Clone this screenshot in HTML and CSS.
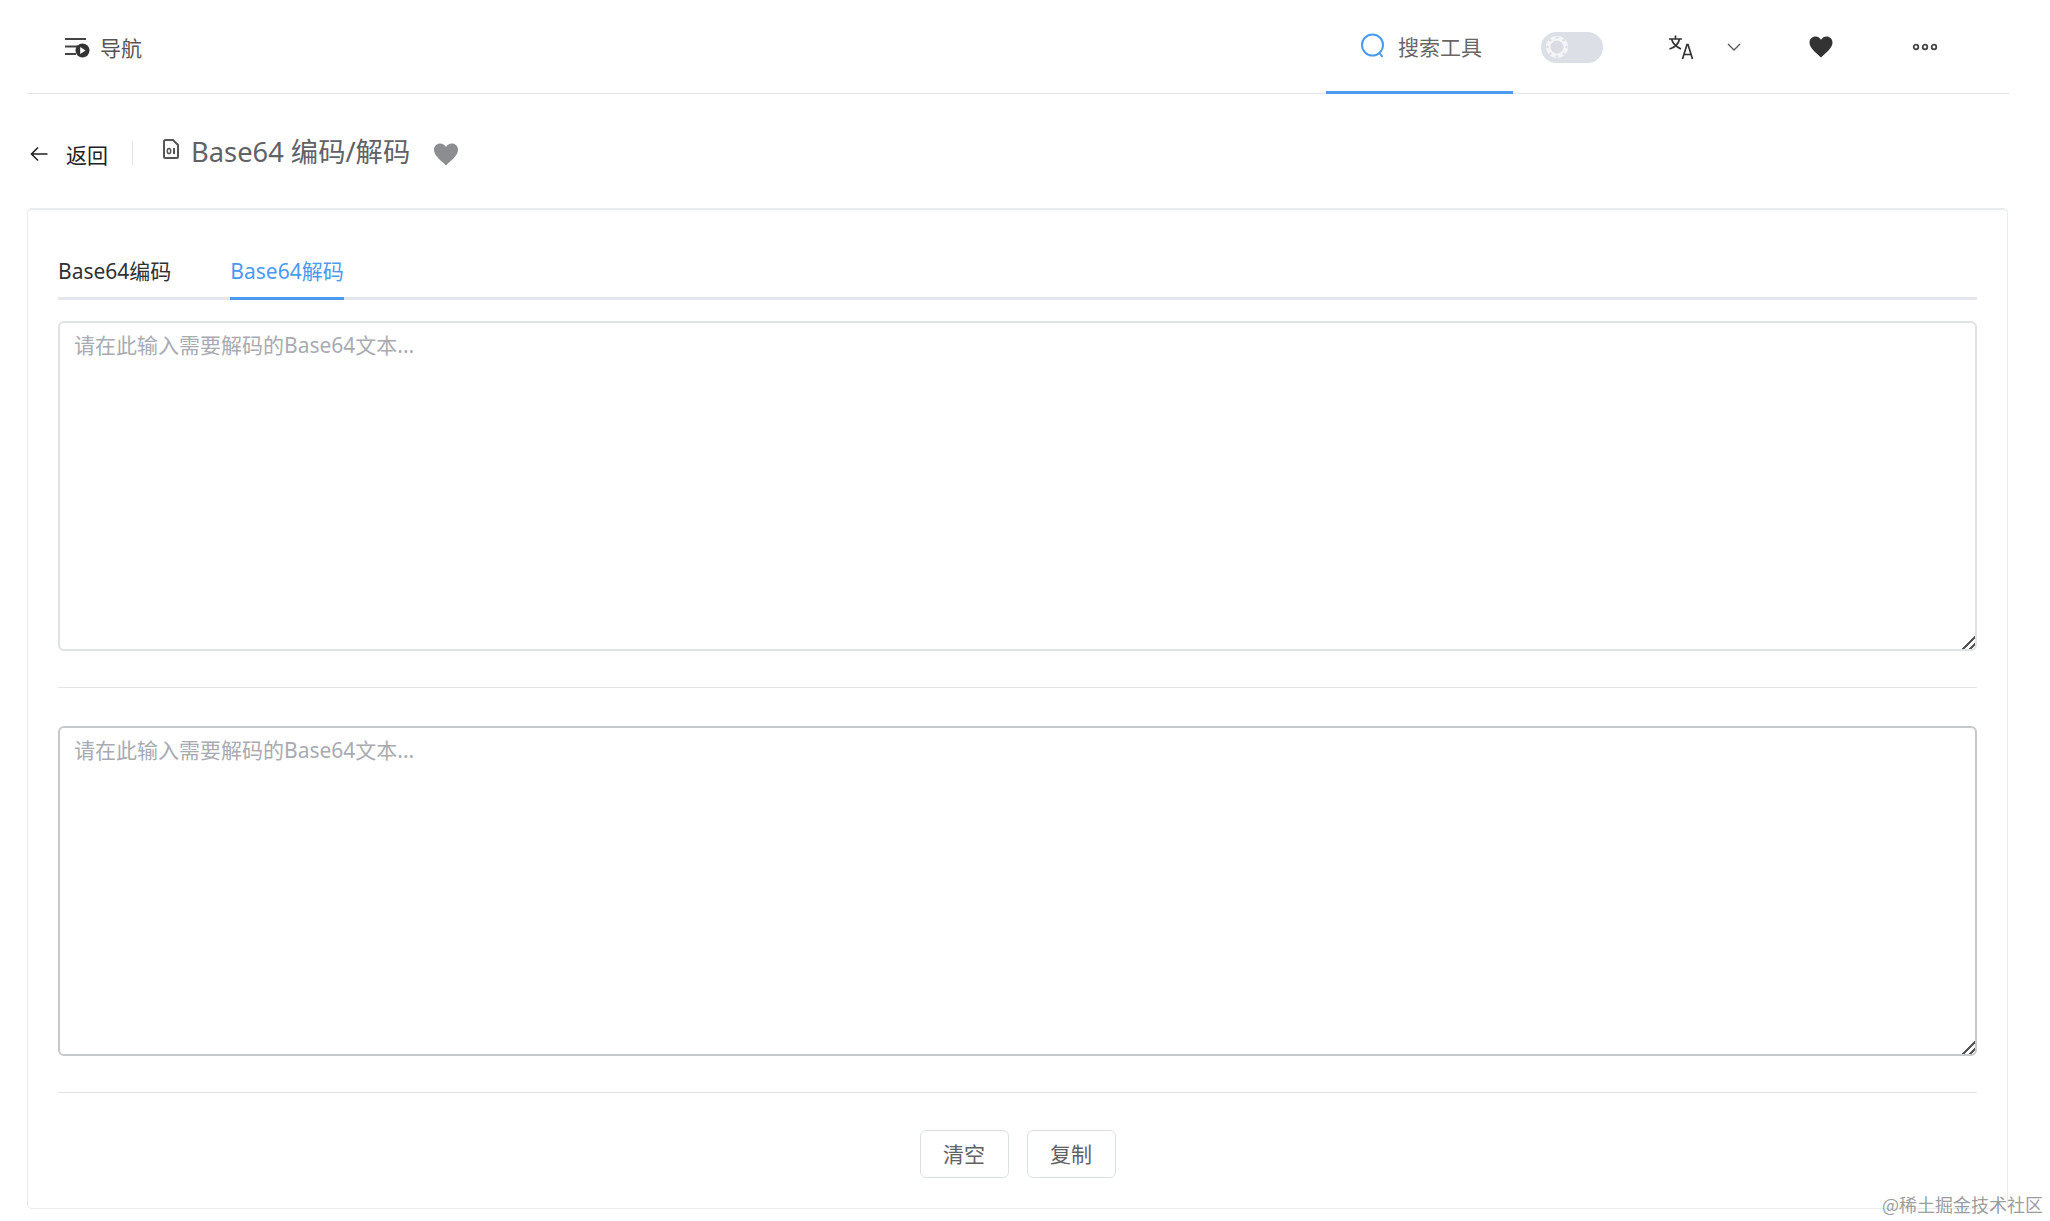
FILE: index.html
```html
<!DOCTYPE html>
<html lang="zh-CN">
<head>
<meta charset="UTF-8">
<meta name="viewport" content="width=device-width, initial-scale=1.0">
<title>Base64 编码/解码</title>
<link rel="stylesheet" href="styles.css">
</head>
<body>
<div class="page">
    <div class="header">
        <div class="nav-btn">
            <svg class="nav-icon" width="26" height="22" viewBox="0 0 26 22">
                <path d="M1 3h21M1 10.500h14M1 18h11" stroke="#444" stroke-width="2" fill="none"/>
                <circle cx="18.500" cy="14.500" r="7" fill="#333"/>
                <path d="M16.200 11v7l5.400-3.500z" fill="#fff"/>
            </svg>
            <span>导航</span>
        </div>
        <div class="search-tab">
            <svg width="26" height="26" viewBox="0 0 26 26">
                <circle cx="12.500" cy="12" r="10.500" stroke="#4a9bf0" stroke-width="2" fill="none"/>
                <path d="M19.500 20l3 4" stroke="#4a9bf0" stroke-width="2" fill="none"/>
            </svg>
            <span>搜索工具</span>
        </div>
        <div class="toggle">
            <svg class="toggle-knob" width="24" height="24" viewBox="0 0 24 24">
                <circle cx="12" cy="12" r="11" fill="#f4f5f7"/>
                <circle cx="12" cy="12" r="6.500" fill="#d9dce3"/>
                <g fill="#d9dce3">
                    <circle cx="12" cy="2.500" r="1.200"/>
                    <circle cx="12" cy="21.500" r="1.200"/>
                    <circle cx="2.500" cy="12" r="1.200"/>
                    <circle cx="21.500" cy="12" r="1.200"/>
                    <circle cx="5.300" cy="5.300" r="1.200"/>
                    <circle cx="18.700" cy="5.300" r="1.200"/>
                    <circle cx="5.300" cy="18.700" r="1.200"/>
                    <circle cx="18.700" cy="18.700" r="1.200"/>
                </g>
            </svg>
        </div>
        <svg class="lang-icon" width="26" height="26" viewBox="0 0 26 26">
            <path d="M1 5h13M7.500 1.500V5M3.500 5c1.500 5 5 8 9.500 10M11.500 5c-1 5-5 8.500-10 10M14.500 25L19 10.500h1L24.500 25M16 20.500h7" stroke="#333" stroke-width="1.700" fill="none"/>
        </svg>
        <svg class="chevron" width="14" height="8" viewBox="0 0 14 8">
            <path d="M1 1l6 6 6-6" stroke="#555" stroke-width="1.300" fill="none"/>
        </svg>
        <svg class="fav-icon" width="24" height="22" viewBox="0 0 24 22">
            <path d="M12 21.500C8 17.500 0.500 12.500 0.500 6.500 0.500 3 3.200 0.500 6.500 0.500c2.300 0 4.300 1.200 5.500 3.300C13.200 1.700 15.200 0.500 17.500 0.500c3.300 0 6 2.500 6 6 0 6-7.500 11-11.500 15z" fill="#333"/>
        </svg>
        <svg class="more-icon" width="26" height="8" viewBox="0 0 26 8">
            <g stroke="#444" stroke-width="1.800" fill="none">
                <circle cx="4" cy="4" r="2.300"/>
                <circle cx="13" cy="4" r="2.300"/>
                <circle cx="22" cy="4" r="2.300"/>
            </g>
        </svg>
    </div>

    <div class="title-row">
        <svg class="back-icon" width="18" height="16" viewBox="0 0 18 16">
            <path d="M17.500 8H1.500M8 1.500L1.500 8 8 14.500" stroke="#222" stroke-width="1.600" fill="none"/>
        </svg>
        <span class="back-text">返回</span>
        <span class="title-divider"></span>
        <svg class="doc-icon" width="16" height="20" viewBox="0 0 16 20">
            <path d="M2.500 1h7.500l5 5v11.500a1.500 1.500 0 0 1-1.500 1.500h-11A1.500 1.500 0 0 1 1 17.500v-15A1.500 1.500 0 0 1 2.500 1z" stroke="#555" stroke-width="2" fill="none"/>
            <ellipse cx="6" cy="12" rx="1.700" ry="2.600" stroke="#555" stroke-width="1.500" fill="none"/>
            <path d="M11 9v6" stroke="#555" stroke-width="2"/>
        </svg>
        <h1 class="title">Base64 编码/解码</h1>
        <svg class="title-heart" width="26" height="23" viewBox="0 0 24 22">
            <path d="M12 21.500C8 17.500 0.500 12.500 0.500 6.500 0.500 3 3.200 0.500 6.500 0.500c2.300 0 4.300 1.200 5.500 3.300C13.200 1.700 15.200 0.500 17.500 0.500c3.300 0 6 2.500 6 6 0 6-7.500 11-11.500 15z" fill="#8b8d90"/>
        </svg>
    </div>

    <div class="card">
        <div class="tabs">
            <div class="tab">Base64编码</div>
            <div class="tab active">Base64解码</div>
        </div>
        <textarea class="text-box" placeholder="请在此输入需要解码的Base64文本..."></textarea>
        <div class="divider"></div>
        <textarea class="text-box dark" placeholder="请在此输入需要解码的Base64文本..."></textarea>
        <div class="divider last"></div>
        <div class="actions">
            <button>清空</button>
            <button>复制</button>
        </div>
    </div>
</div>
<div class="watermark">@稀土掘金技术社区</div>
</body>
</html>
```

FILE: styles.css
```css
html, body {
    height: 1221px;
    overflow: hidden;
}
body {
    font-family: "Noto Sans", "Noto Sans CJK SC", sans-serif;
    font-size: 21px;
    margin: 0;
    padding: 0;
    background-color: #fff;
    color: #333;
}
.page {
    padding: 0 41px 0 27px;
}
.header {
    display: flex;
    align-items: center;
    box-sizing: border-box;
    height: 94px;
    padding-top: 1px;
    border-bottom: 1px solid #e2e4e8;
}
.nav-btn {
    display: flex;
    align-items: center;
    margin-left: 37px;
    margin-right: auto;
    color: #555;
}
.nav-icon {
    margin-right: 10px;
}
.search-tab {
    display: flex;
    align-items: center;
    align-self: stretch;
    box-sizing: border-box;
    width: 187px;
    padding-left: 34px;
    border-bottom: 3px solid #4a9bf0;
    margin-bottom: -1px;
    color: #666;
}
.search-tab svg {
    margin-right: 12px;
}
.toggle {
    display: flex;
    align-items: center;
    width: 62px;
    height: 31px;
    margin-left: 28px;
    padding-left: 4px;
    box-sizing: border-box;
    background-color: #dcdfe6;
    border-radius: 16px;
}
.lang-icon {
    margin-left: 65px;
}
.chevron {
    margin-left: 33px;
}
.fav-icon {
    margin-left: 68px;
}
.more-icon {
    margin-left: 79px;
    margin-right: 71px;
}
.title-row {
    display: flex;
    align-items: center;
    height: 114px;
    padding-top: 6px;
    box-sizing: border-box;
}
.back-icon {
    margin-left: 3px;
}
.back-text {
    margin-left: 18px;
    color: #222;
}
.title-divider {
    width: 1px;
    height: 24px;
    margin: 0 30px 0 24px;
    background-color: #e2e4e8;
}
.doc-icon {
    margin-top: -10px;
}
.title {
    font-size: 27.3px;
    font-weight: normal;
    line-height: 36px;
    margin: -4px 0 0 12px;
    color: #606266;
}
.title-heart {
    margin-left: 23px;
}
.card {
    box-sizing: border-box;
    width: 1981px;
    height: 1001px;
    padding: 46px 30px 0 30px;
    border: 1px solid #e9ebef;
    border-top-width: 2px;
    border-radius: 5px;
}
.tabs {
    display: flex;
    gap: 59px;
    border-bottom: 3px solid #e4e7ed;
    margin-bottom: 21px;
}
.tab {
    line-height: 30px;
    padding-bottom: 11px;
    margin-bottom: -3px;
    border-bottom: 3px solid transparent;
    color: #303133;
}
.tab.active {
    color: #4a9bf0;
    border-bottom-color: #4a9bf0;
}
.text-box {
    display: block;
    box-sizing: border-box;
    width: 100%;
    height: 330px;
    padding: 7px 14px;
    font-family: inherit;
    font-size: 21px;
    line-height: 30px;
    border: 2px solid #dfe1e5;
    border-radius: 6px;
    outline: none;
}
.text-box::-webkit-resizer {
    background: linear-gradient(135deg, transparent 56%, #555 56%, #555 65%, transparent 65%, transparent 78%, #555 78%, #555 87%, transparent 87%);
}
.text-box.dark {
    border-color: #c6c8cc;
}
.text-box::placeholder {
    color: #a8abb2;
}
.divider {
    height: 1px;
    margin: 36px 0 38px;
    background-color: #e2e4e8;
}
.divider.last {
    margin-bottom: 37px;
}
.actions {
    display: flex;
    justify-content: center;
    gap: 18px;
}
button {
    width: 89px;
    height: 48px;
    padding: 0 0 2px;
    font-family: inherit;
    font-size: 21px;
    color: #606266;
    background-color: #fff;
    border: 1px solid #dcdfe6;
    border-radius: 6px;
    cursor: pointer;
}
.watermark {
    position: absolute;
    right: 7px;
    bottom: 4px;
    font-family: "Noto Sans CJK SC", sans-serif;
    font-size: 18px;
    line-height: 26px;
    color: rgba(130, 130, 130, 0.8);
}
```
